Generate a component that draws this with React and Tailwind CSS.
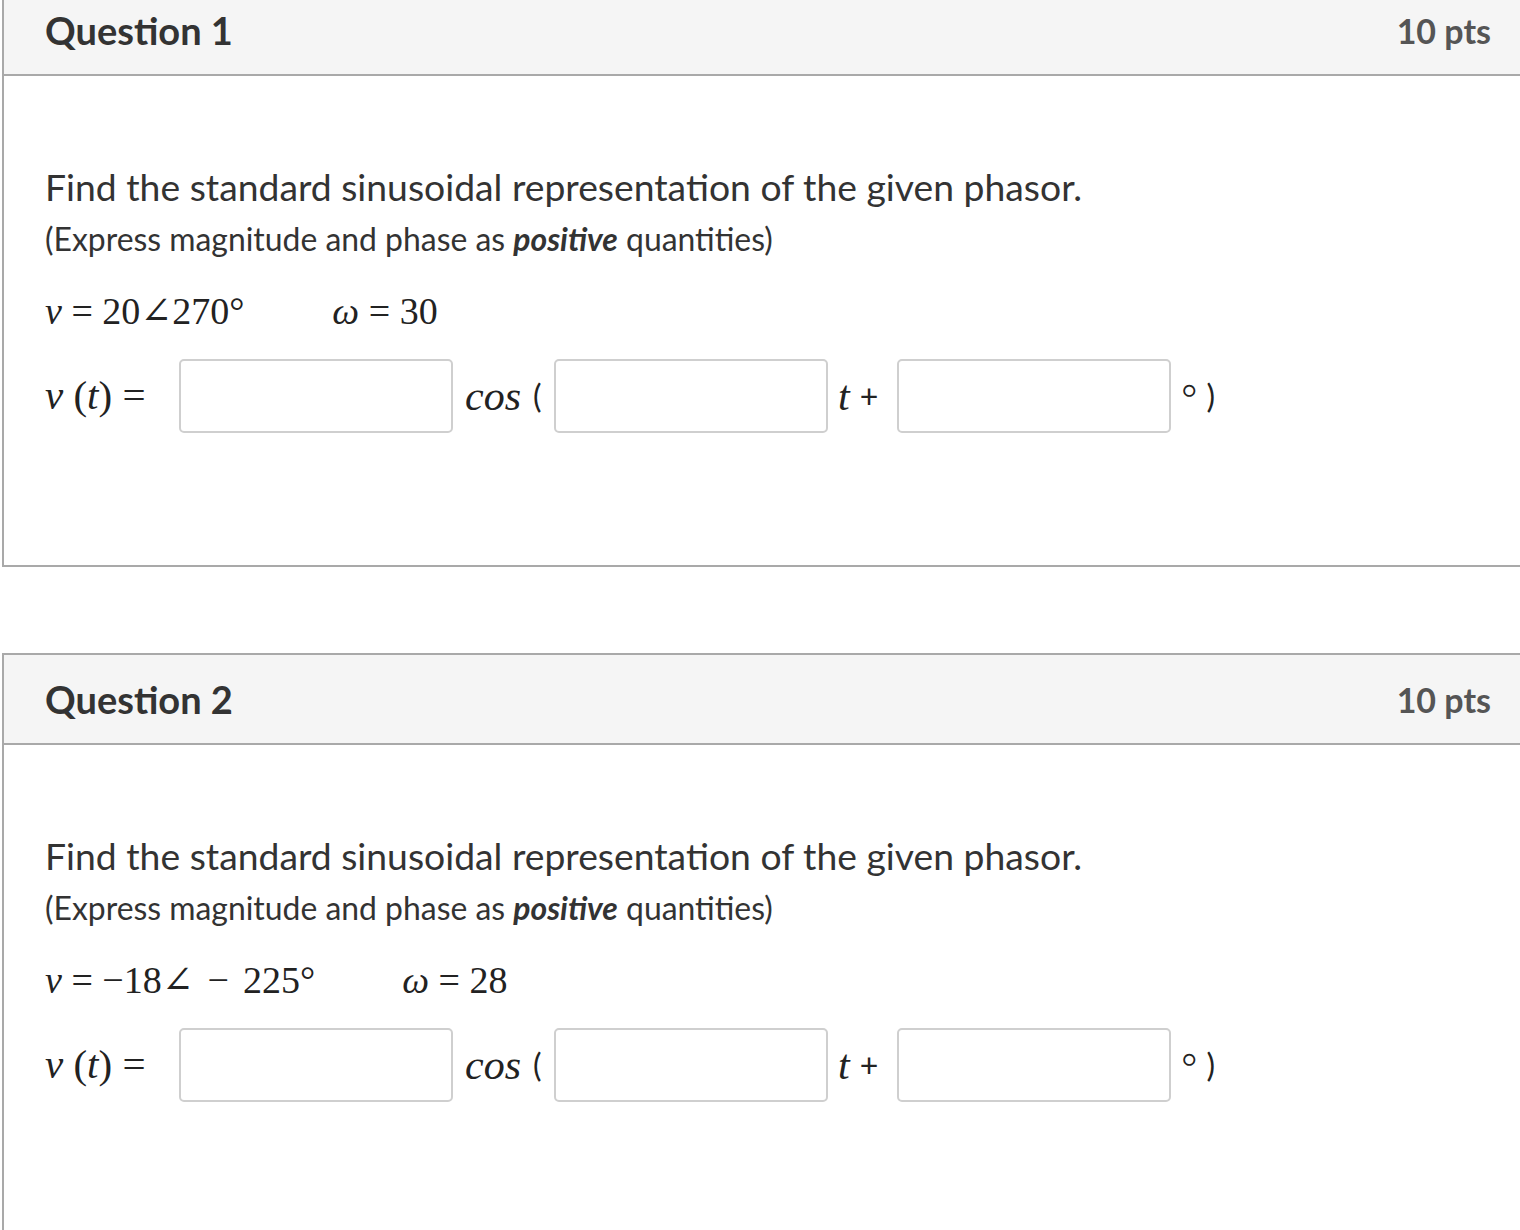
import React from 'react';

const math = { fontFamily: '"Liberation Serif", "DejaVu Serif", serif' };

const Field = () => (
    <input
        type="text"
        className="h-[74px] w-[274px] shrink-0 rounded-[5px] border-2 border-[#cfcfcf] bg-white outline-none"
    />
);

const Question = ({ num, mag, phase, omega, gap }) => (
    <div className="ml-[2px] w-[1540px] border-y-2 border-l-2 border-[#a9a9a9] bg-white">
        <div className="flex h-[90px] items-center justify-between border-b-2 border-[#a9a9a9] bg-[#f5f5f5] pl-[41px] pr-[51px]">
            <h2 className="text-[38px] font-bold text-[#333]">Question {num}</h2>
            <span className="text-[34px] font-bold text-[#555]">10 pts</span>
        </div>

        <div className="px-[41px] pt-[87px] pb-[132px] text-[#333]">
            <p className="text-[37.3px] leading-[48px]">Find the standard sinusoidal representation of the given phasor.</p>
            <p className="mt-[8px] text-[31.9px] leading-[40px]">
                (Express magnitude and phase as <b><i>positive</i></b> quantities)
            </p>

            <div className="mt-[32px] flex h-[40px] items-center text-[38px] text-[#222]" style={math}>
                <span><i>v</i> = {mag}∠{phase}°</span>
                <span style={{ marginLeft: gap }}><i>ω</i> = {omega}</span>
            </div>

            <div className="mt-[28px] flex items-center">
                <span className="w-[134px] shrink-0 text-[41px] text-[#222]" style={math}>
                    <i>v</i> (<i>t</i>) =
                </span>
                <Field />
                <span className="flex w-[101px] shrink-0 items-center pl-[12px] text-[32px] text-[#222]">
                    <i className="text-[42px]" style={math}>cos</i>
                    <span className="ml-[12px]">(</span>
                </span>
                <Field />
                <span className="flex w-[69px] shrink-0 items-center pl-[10px] text-[32px] text-[#222]">
                    <i className="text-[42px]" style={math}>t</i>
                    <span className="ml-[10px]">+</span>
                </span>
                <Field />
                <span className="ml-[11px] flex items-center text-[32px] text-[#222]">
                    <span className="-mt-[14px] text-[22px]">○</span>
                    <span className="ml-[10px]">)</span>
                </span>
            </div>
        </div>
    </div>
);

export default function App() {
    return (
        <div className="min-h-[1230px] overflow-hidden bg-white" style={{ fontFamily: 'Lato, "Noto Sans", sans-serif' }}>
            <div className="-mt-[16px] flex flex-col gap-[86px]">
                <Question num={1} mag="20" phase="270" omega="30" gap="88px" />
                <Question
                    num={2}
                    mag="−18"
                    phase={<><span className="mx-[14px]">−</span>225</>}
                    omega="28"
                    gap="87px"
                />
            </div>
        </div>
    );
}
